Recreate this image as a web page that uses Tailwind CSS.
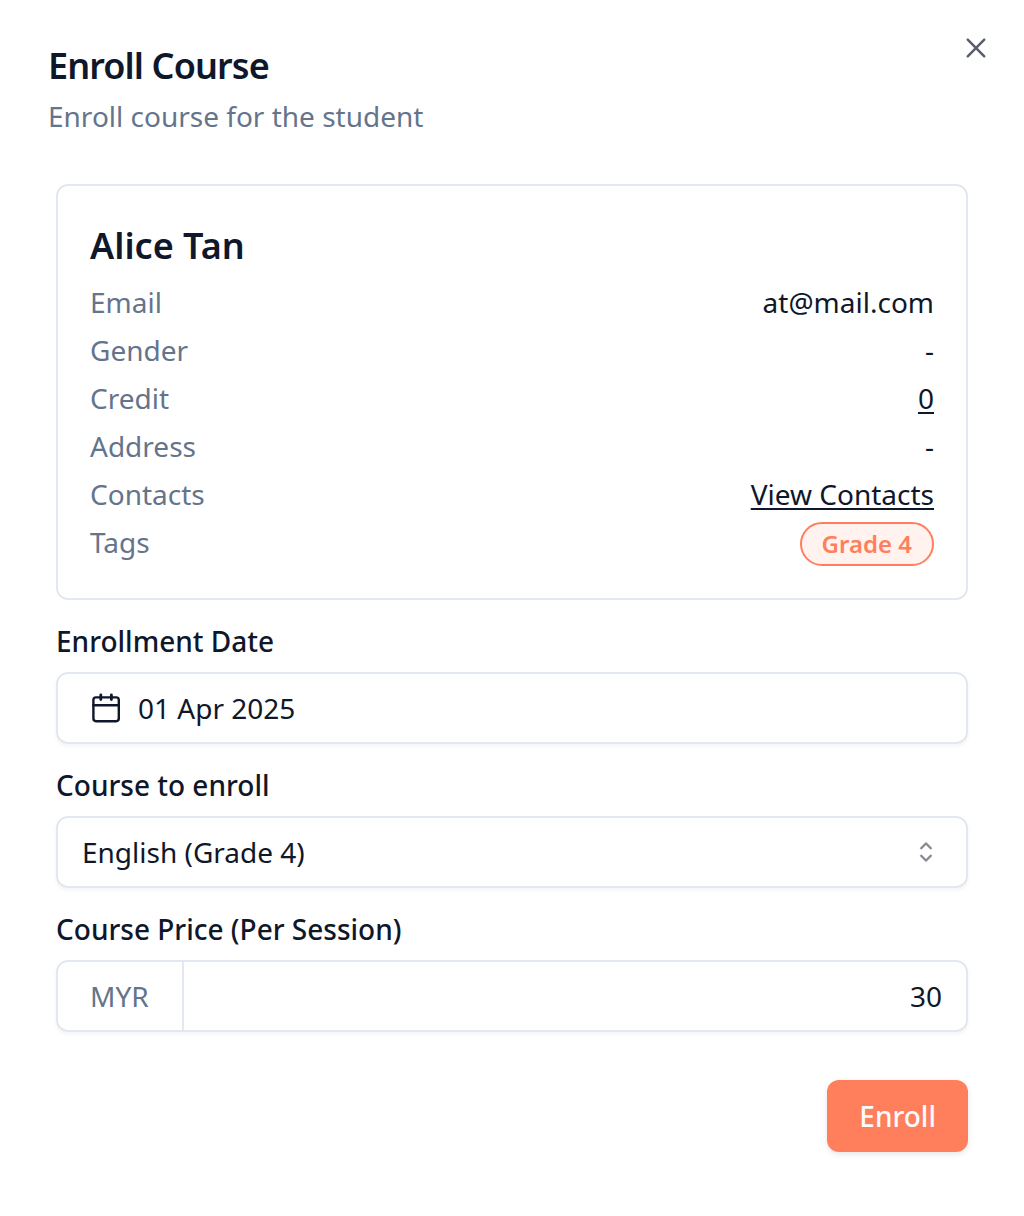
<!DOCTYPE html>
<html lang="en">
<head>
  <meta charset="UTF-8" />
  <meta name="viewport" content="width=device-width, initial-scale=1.0" />
  <title>Enroll Course</title>
  <script src="https://cdn.jsdelivr.net/npm/@tailwindcss/browser@4"></script>
</head>
<body class="bg-white text-[#0f172a] min-h-screen font-['Noto_Sans',sans-serif] text-[28px] leading-10">
  <main role="dialog" aria-labelledby="title" class="relative p-12">
    <!-- Close -->
    <button type="button" aria-label="Close" class="absolute top-8 right-8 text-[#575d6e]">
      <svg class="size-8" viewBox="0 0 15 15" fill="currentColor">
        <path fill-rule="evenodd" clip-rule="evenodd" d="M11.7816 4.03157C12.0062 3.80702 12.0062 3.44295 11.7816 3.2184C11.5571 2.99385 11.193 2.99385 10.9685 3.2184L7.50005 6.68682L4.03164 3.2184C3.80708 2.99385 3.44301 2.99385 3.21846 3.2184C2.99391 3.44295 2.99391 3.80702 3.21846 4.03157L6.68688 7.49999L3.21846 10.9684C2.99391 11.193 2.99391 11.557 3.21846 11.7816C3.44301 12.0061 3.80708 12.0061 4.03164 11.7816L7.50005 8.31316L10.9685 11.7816C11.193 12.0061 11.5571 12.0061 11.7816 11.7816C12.0062 11.557 12.0062 11.193 11.7816 10.9684L8.31322 7.49999L11.7816 4.03157Z" />
      </svg>
    </button>

    <!-- Header -->
    <header>
      <h1 id="title" class="text-[36px] leading-9 font-semibold tracking-tight">Enroll Course</h1>
      <p class="mt-3 text-[#64748b]">Enroll course for the student</p>
    </header>

    <form class="mt-12 px-2">
      <!-- Student -->
      <section class="border-2 border-[#e2e8f0] rounded-xl px-8 pt-9 pb-8">
        <h2 class="text-[36px] leading-[48px] font-semibold mb-2">Alice Tan</h2>
        <dl class="leading-[48px]">
          <div class="flex justify-between">
            <dt class="text-[#64748b]">Email</dt>
            <dd>at@mail.com</dd>
          </div>
          <div class="flex justify-between">
            <dt class="text-[#64748b]">Gender</dt>
            <dd>-</dd>
          </div>
          <div class="flex justify-between">
            <dt class="text-[#64748b]">Credit</dt>
            <dd><a href="#" class="underline underline-offset-3">0</a></dd>
          </div>
          <div class="flex justify-between">
            <dt class="text-[#64748b]">Address</dt>
            <dd>-</dd>
          </div>
          <div class="flex justify-between">
            <dt class="text-[#64748b]">Contacts</dt>
            <dd><a href="#" class="underline underline-offset-3">View Contacts</a></dd>
          </div>
          <div class="flex justify-between items-end">
            <dt class="text-[#64748b]">Tags</dt>
            <dd class="border-2 border-[#ff7f5c] bg-[#fff2ef] text-[#ff7f5c] rounded-full px-5 text-2xl leading-10 font-semibold">Grade 4</dd>
          </div>
        </dl>
      </section>

      <!-- Enrollment date -->
      <label for="date" class="block mt-6 mb-[14px] leading-[34px] font-medium">Enrollment Date</label>
      <button type="button" id="date" class="flex items-center gap-4 w-full h-[72px] px-8 border-2 border-[#e2e8f0] rounded-xl shadow-[0_2px_4px_rgb(0_0_0/0.05)]">
        <svg class="size-8" viewBox="0 0 32 32" fill="none" stroke="currentColor" stroke-width="2.4" stroke-linecap="round" stroke-linejoin="round">
          <rect x="3.4" y="5.4" width="25.4" height="23.8" rx="2.6" />
          <path d="M3.4 13.2h25.4" />
          <path d="M10.8 2.8v4.8M21.4 2.8v4.8" stroke-width="2.8" />
        </svg>
        01 Apr 2025
      </button>

      <!-- Course -->
      <label for="course" class="block mt-6 mb-[14px] leading-[34px] font-medium">Course to enroll</label>
      <div class="grid items-center">
        <select id="course" class="col-start-1 row-start-1 appearance-none w-full h-[72px] px-6 border-2 border-[#e2e8f0] rounded-xl shadow-[0_2px_4px_rgb(0_0_0/0.05)]">
          <option>English (Grade 4)</option>
        </select>
        <svg class="col-start-1 row-start-1 justify-self-end mr-[26px] size-8 opacity-50 pointer-events-none" viewBox="0 0 15 15" fill="currentColor" stroke="currentColor" stroke-width="0.2">
          <path fill-rule="evenodd" clip-rule="evenodd" d="M4.93179 5.43179C4.75605 5.60753 4.75605 5.89245 4.93179 6.06819C5.10753 6.24392 5.39245 6.24392 5.56819 6.06819L7.49999 4.13638L9.43179 6.06819C9.60753 6.24392 9.89245 6.24392 10.0682 6.06819C10.2439 5.89245 10.2439 5.60753 10.0682 5.43179L7.81819 3.18179C7.73379 3.0974 7.61933 3.04999 7.49999 3.04999C7.38064 3.04999 7.26618 3.0974 7.18179 3.18179L4.93179 5.43179ZM10.0682 9.56819C10.2439 9.39245 10.2439 9.10753 10.0682 8.93179C9.89245 8.75606 9.60753 8.75606 9.43179 8.93179L7.49999 10.8636L5.56819 8.93179C5.39245 8.75606 5.10753 8.75606 4.93179 8.93179C4.75605 9.10753 4.75605 9.39245 4.93179 9.56819L7.18179 11.8182C7.35753 11.9939 7.64245 11.9939 7.81819 11.8182L10.0682 9.56819Z" />
        </svg>
      </div>

      <!-- Price -->
      <label for="price" class="block mt-6 mb-[14px] leading-[34px] font-medium">Course Price (Per Session)</label>
      <div class="flex items-stretch h-[72px] border-2 border-[#e2e8f0] rounded-xl shadow-[0_2px_4px_rgb(0_0_0/0.05)]">
        <span class="flex items-center pl-8 pr-[33px] border-r-2 border-[#e2e8f0] text-[#64748b]">MYR</span>
        <input id="price" type="text" inputmode="decimal" value="30" class="flex-1 min-w-0 px-6 text-right outline-none" />
      </div>

      <div class="flex justify-end mt-12">
        <button type="submit" class="h-[72px] px-8 rounded-xl bg-[#ff7f5c] text-[#f8fafc] font-medium shadow-[0_2px_6px_rgb(0_0_0/0.1)]">Enroll</button>
      </div>
    </form>
  </main>
</body>
</html>
